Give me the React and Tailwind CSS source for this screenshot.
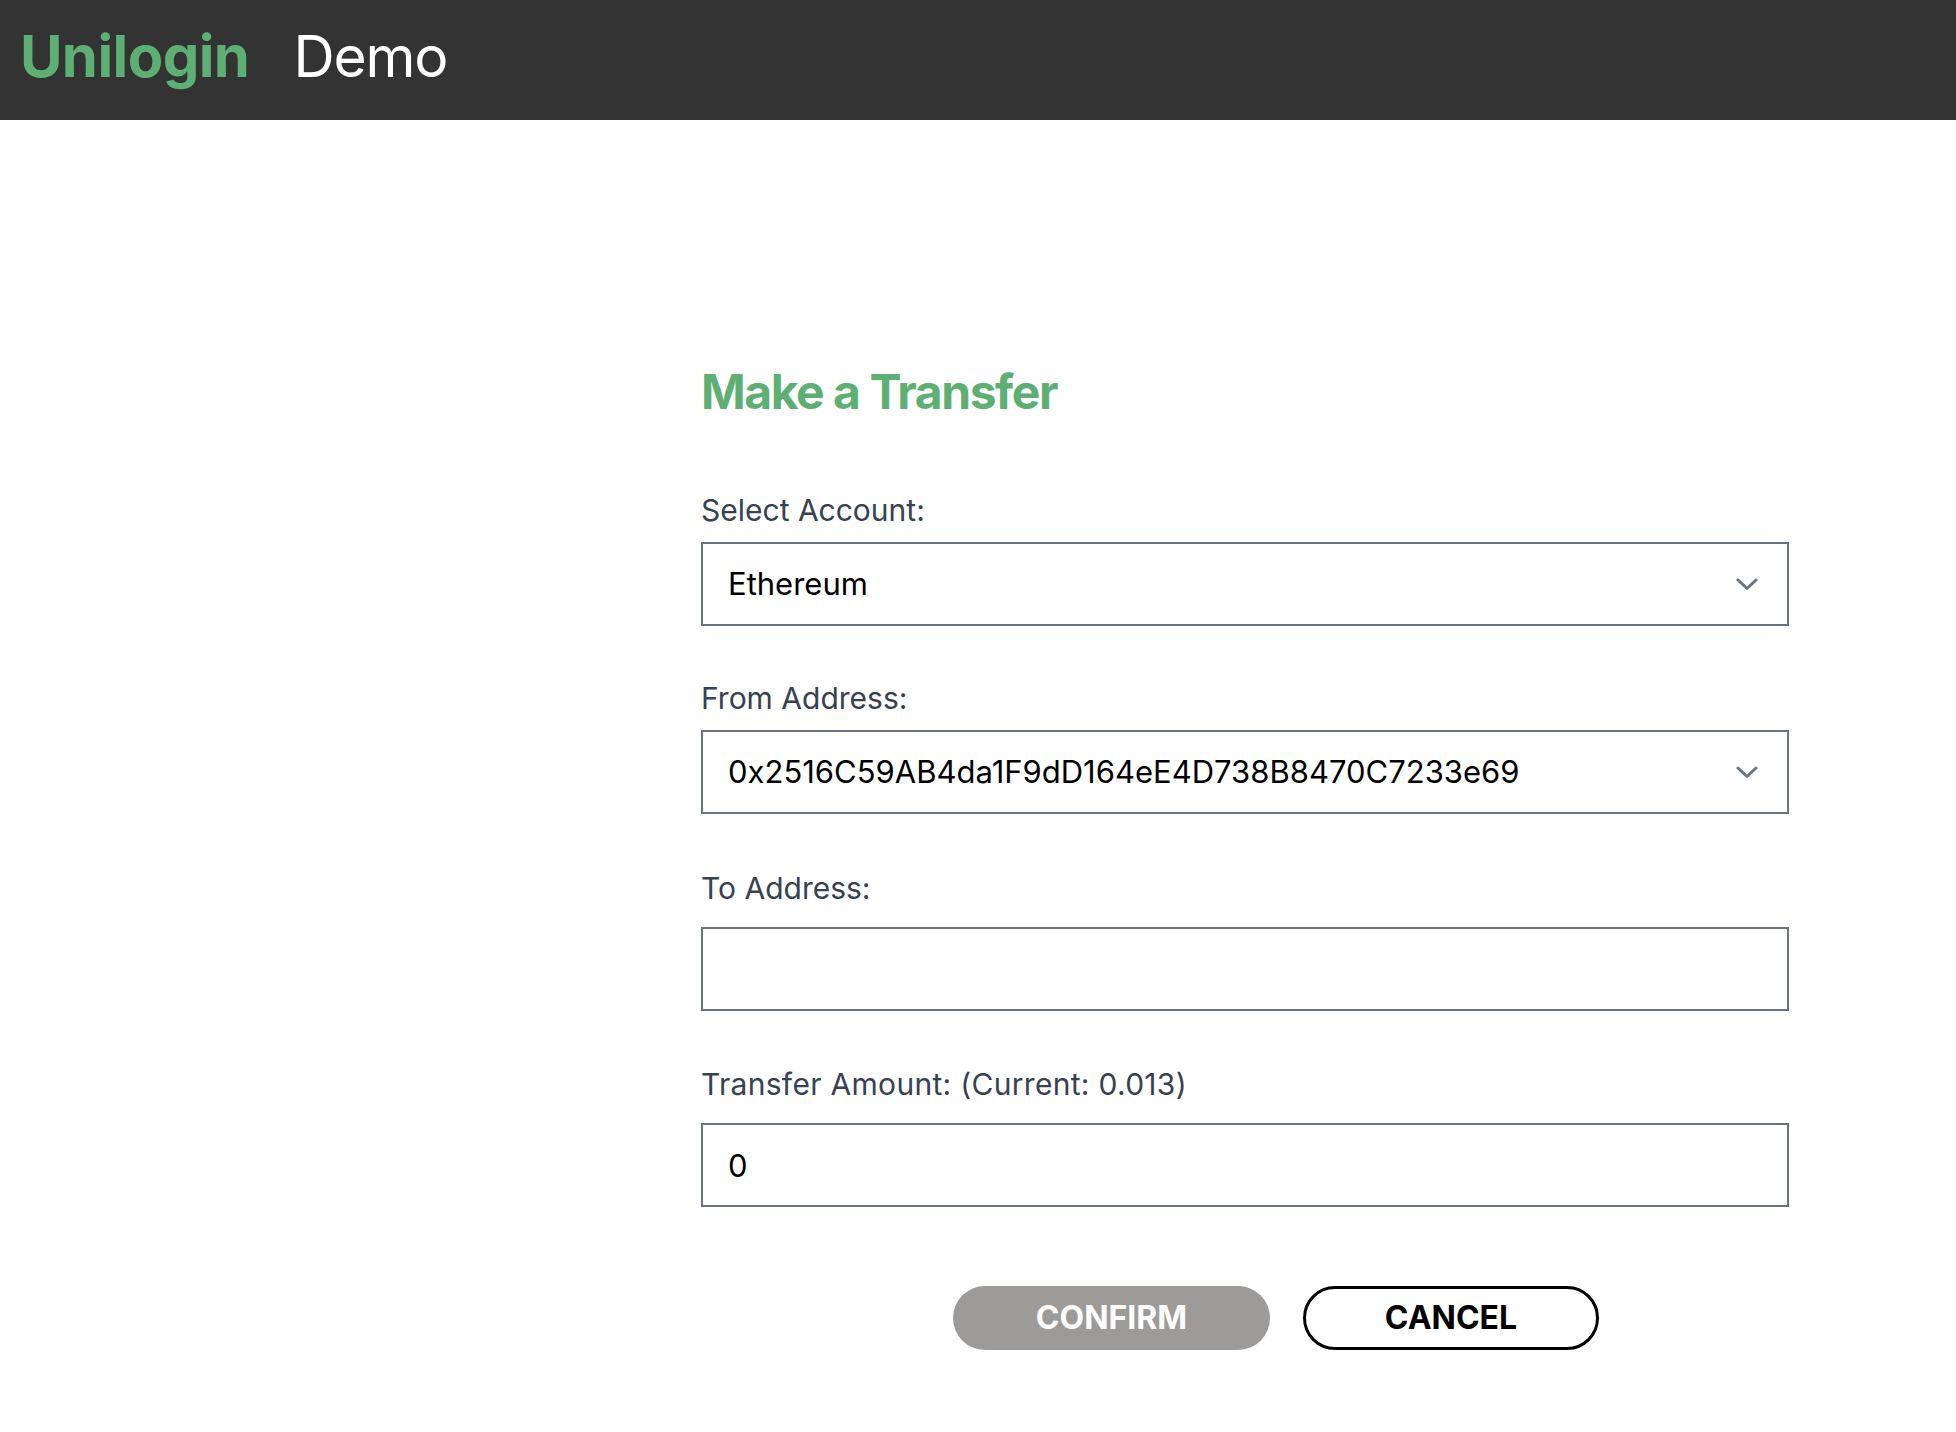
import React from "react";

function Chevron() {
  return (
    <svg width="22" height="13" viewBox="0 0 22 13" fill="none">
      <polyline points="2,2 11,10.5 20,2" stroke="#6b7280" strokeWidth="3" strokeLinecap="round" strokeLinejoin="round" />
    </svg>
  );
}

function SelectBox({ value }) {
  return (
    <div className="flex h-[84px] items-center justify-between border-2 border-[#6b7280] bg-white pl-[25px] pr-[29px]">
      <span className="text-[31px] text-black">{value}</span>
      <Chevron />
    </div>
  );
}

function TextBox({ value }) {
  return (
    <input
      readOnly
      defaultValue={value}
      className="block h-[84px] w-full border-2 border-[#6b7280] bg-white px-[25px] text-[31px] text-black outline-none font-['Inter']"
    />
  );
}

export default function App() {
  return (
    <div className="min-h-screen bg-white font-['Inter',sans-serif]">
      <header className="flex h-[120px] items-center bg-[#333333] pb-[7px] pl-[20px]">
        <span className="text-[58px] font-bold tracking-[-0.01em] text-[#5eaf73]">Unilogin</span>
        <span className="ml-[44px] text-[57px] tracking-[-0.02em] text-white">Demo</span>
      </header>
      <main className="ml-[701px] w-[1088px] pt-[243px] pb-[80px]">
        <h1 className="text-[48px] font-bold leading-[58px] tracking-[-0.03em] text-[#5eaf73]">Make a Transfer</h1>

        <div className="mt-[71px]">
          <label className="mb-[14px] block text-[30px] leading-[36px] text-[#374151]">Select Account:</label>
          <SelectBox value="Ethereum" />
        </div>

        <div className="mt-[54px]">
          <label className="mb-[14px] block text-[30px] leading-[36px] text-[#374151]">From Address:</label>
          <SelectBox value="0x2516C59AB4da1F9dD164eE4D738B8470C7233e69" />
        </div>

        <div className="mt-[56px]">
          <label className="mb-[21px] block text-[30px] leading-[36px] text-[#374151]">To Address:</label>
          <TextBox value="" />
        </div>

        <div className="mt-[55px]">
          <label className="mb-[21px] block text-[30px] leading-[36px] tracking-[0.01em] text-[#374151]">Transfer Amount: (Current: 0.013)</label>
          <TextBox value="0" />
        </div>

        <div className="mt-[79px] flex gap-[33px] pl-[252px]">
          <button className="h-[64px] w-[317px] rounded-full bg-[#9c9b9a] text-[32px] font-bold text-white">CONFIRM</button>
          <button className="h-[64px] w-[296px] rounded-full border-[3px] border-black bg-white text-[32px] font-bold text-black">CANCEL</button>
        </div>
      </main>
    </div>
  );
}
